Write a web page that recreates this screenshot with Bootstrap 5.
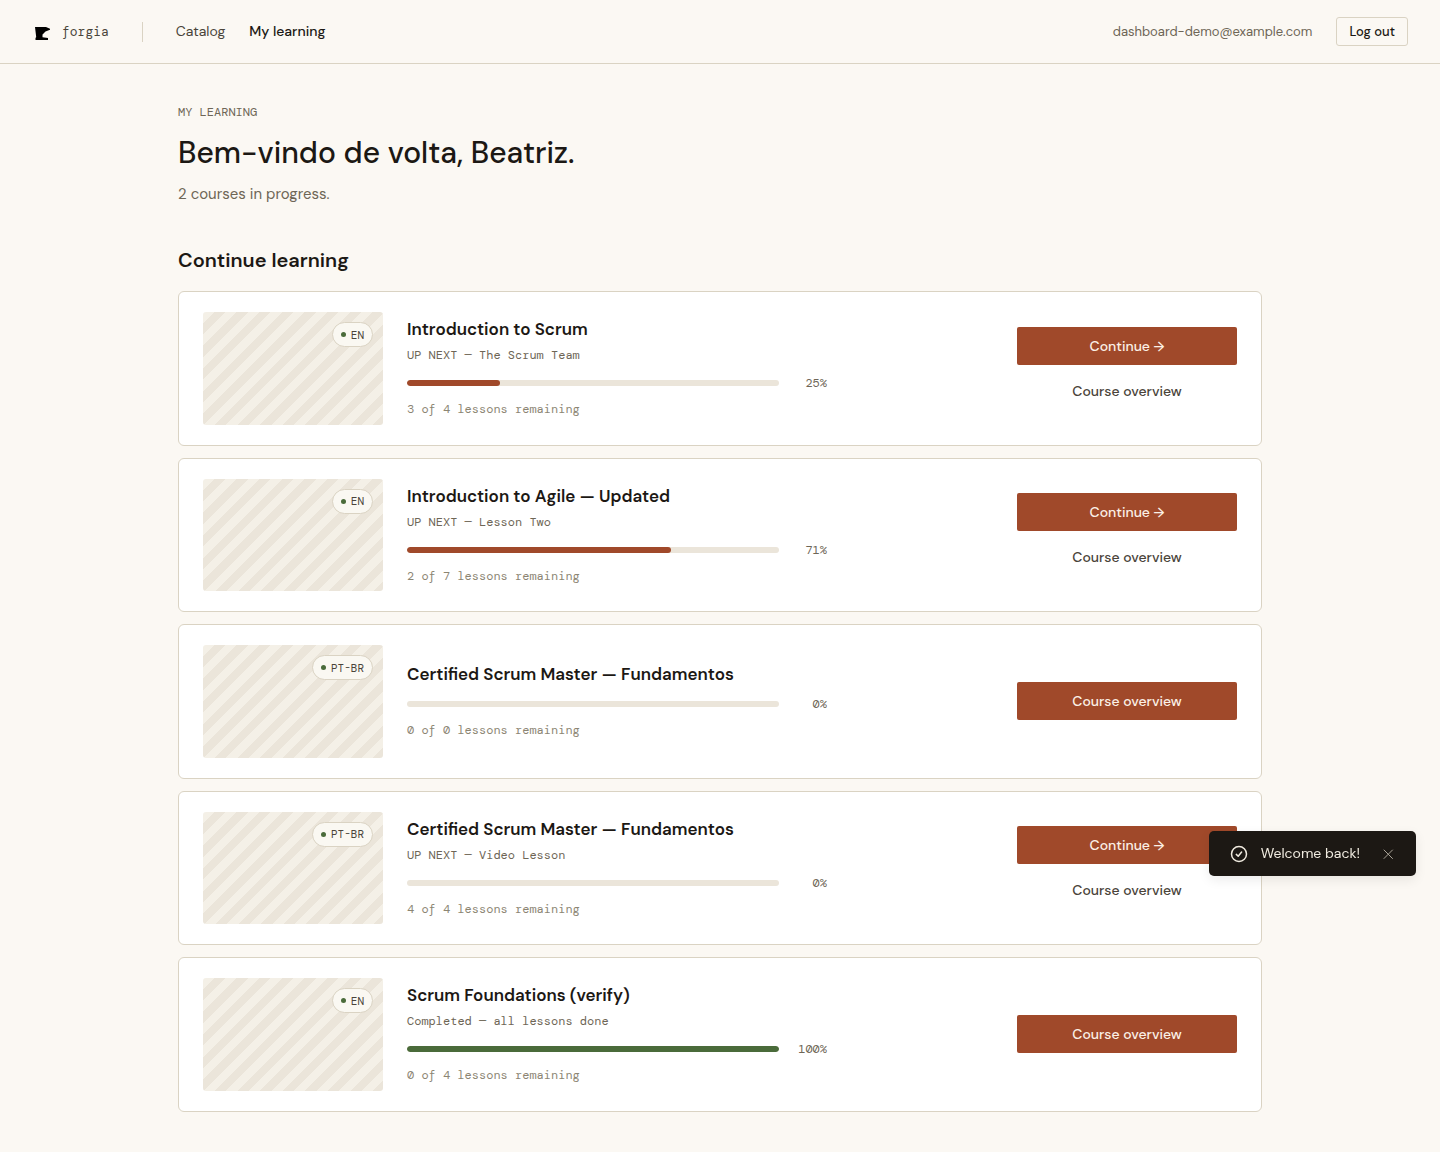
<!DOCTYPE html>
<html lang="en">
<head>
<meta charset="utf-8">
<meta name="viewport" content="width=device-width, initial-scale=1">
<title>My learning · forgia</title>
<link href="https://cdn.jsdelivr.net/npm/bootstrap@5.3.0/dist/css/bootstrap.min.css" rel="stylesheet">
<style>
:root{--paper:#fbf8f3;--ink:#1c1814;--line:#dad3c3;--muted:#6e6656;--soft:#8c8573;--sand:#ebe5da;--rust:#a0492a;--moss:#4a6b3a}
body{background:var(--paper);color:var(--ink);font-family:"DM Sans",Inter,"Open Sans",sans-serif;font-size:14px;line-height:20px}
.mono{font-family:"DM Mono","Liberation Mono",monospace}
.topbar{min-height:64px;padding:0 32px;border-bottom:1px solid var(--line)}
.brand{font-size:13px;color:#4a443a;gap:10px}
.divider{width:1px;height:20px;background:var(--line);margin:0 33px}
.topbar nav{gap:24px}
.topbar nav a{font-size:14px;line-height:19px;color:#4a443a;text-decoration:none}
.topbar nav a.active{color:var(--ink);font-weight:500}
.email{font-size:13px;color:var(--muted)}
.btn-out{font-size:13px;font-weight:500;line-height:19px;padding:4px 12px;border:1px solid var(--line);border-radius:3px;color:var(--ink)}
.page{max-width:1180px;padding:40px 48px}
.eyebrow{font-size:12px;line-height:16px;color:var(--muted);margin-bottom:12px}
h1{font-size:30px;line-height:42px;font-weight:500;margin-bottom:8px}
.intro{font-size:15px;line-height:24px;color:var(--muted);margin-bottom:40px}
h2{font-size:20px;line-height:28px;font-weight:600;margin-bottom:17px}
.courses{gap:12px}
.course{border:1px solid var(--line);border-radius:6px;background:#fff;padding:20px 24px;gap:24px}
.thumb{width:180px;aspect-ratio:16/10;border-radius:3px;background:repeating-linear-gradient(135deg,#f4f0e7 0 8px,var(--sand) 8px 16px)}
.lang{top:10px;right:10px;height:25px;padding:0 8px;gap:5px;border:1px solid var(--line);border-radius:13px;background:#faf8f2;font-size:11px;color:#4a443a}
.dot{width:5px;height:5px;border-radius:50%;background:var(--moss)}
.info{max-width:420px}
h3{font-size:17px;line-height:24px;font-weight:600;margin-bottom:9px}
h3.has-next{margin-bottom:4px}
.next{font-size:12px;line-height:20px;color:var(--muted);margin-bottom:9px}
.meter{gap:12px;height:18px;margin-bottom:7px}
.meter .progress{height:6px;border-radius:3px;background:var(--sand)}
.meter .progress-bar{background:var(--rust);border-radius:3px}
.meter .finished{background:var(--moss)}
.pct{width:36px;font-size:12px;color:var(--muted);text-align:right}
.left{font-size:12px;line-height:20px;color:var(--soft)}
.acts{width:220px;gap:7px}
.acts .btn{font-size:14px;font-weight:500;line-height:20px;padding:9px 16px;border:0;border-radius:2px;color:#4a443a}
.acts .main-act{background:var(--rust);color:#fbf0e6}
.note{right:24px;bottom:276px;height:45px;padding:0 20px;gap:12px;border-radius:5px;background:var(--ink);color:#f0ebe0;line-height:19px;box-shadow:0 4px 12px rgba(28,24,20,.08)}
.note button{color:#aaa498;width:16px;height:16px;margin-left:8px}
</style>
</head>
<body>
<header class="topbar d-flex align-items-center">
  <a href="#" class="brand mono d-flex align-items-center text-decoration-none">
    <svg width="20" height="20" viewBox="0 0 20 20" aria-hidden="true"><path d="M3 5H14L18 6.800V7.800L13.500 9.500L10.500 12.500V15.200L16 16V18H3.500V16L4.200 15Z" fill="#000"/></svg>
    forgia</a>
  <span class="divider"></span>
  <nav class="d-flex"><a href="#">Catalog</a><a href="#" class="active">My learning</a></nav>
  <span class="email ms-auto me-4">dashboard-demo@example.com</span>
  <button class="btn btn-out">Log out</button>
</header>
<main class="page mx-auto">
  <p class="eyebrow mono">MY LEARNING</p>
  <h1>Bem-vindo de volta, Beatriz.</h1>
  <p class="intro">2 courses in progress.</p>
  <h2>Continue learning</h2>
  <div id="courses" class="courses d-flex flex-column"></div>
</main>
<div class="note position-fixed d-flex align-items-center" role="status">
  <svg width="20" height="20" viewBox="0 0 20 20" fill="none" stroke="#f0ebe0" stroke-width="1.500" stroke-linecap="round" stroke-linejoin="round" aria-hidden="true"><circle cx="10" cy="10" r="7.500"/><path d="M7.300 10.400L9.200 12.200L12.600 8"/></svg>
  <span>Welcome back!</span>
  <button class="btn p-0 border-0 d-flex" aria-label="Dismiss"><svg width="16" height="16" viewBox="0 0 16 16" stroke="currentColor" stroke-width="1" stroke-linecap="round"><path d="M4 4l8.500 8.500M12.500 4L4 12.500"/></svg></button>
</div>
<script src="https://cdn.jsdelivr.net/npm/bootstrap@5.3.0/dist/js/bootstrap.bundle.min.js"></script>
<script>
const courses=[
 ['EN','Introduction to Scrum','UP NEXT — The Scrum Team',25,'3 of 4',1],
 ['EN','Introduction to Agile — Updated','UP NEXT — Lesson Two',71,'2 of 7',1],
 ['PT-BR','Certified Scrum Master — Fundamentos','',0,'0 of 0',0],
 ['PT-BR','Certified Scrum Master — Fundamentos','UP NEXT — Video Lesson',0,'4 of 4',1],
 ['EN','Scrum Foundations (verify)','Completed — all lessons done',100,'0 of 4',0]];
document.getElementById('courses').innerHTML=courses.map(([l,t,n,p,r,c])=>`
<article class="course d-flex align-items-center">
 <div class="thumb position-relative flex-shrink-0"><span class="lang mono position-absolute d-flex align-items-center"><i class="dot"></i>${l}</span></div>
 <div class="info flex-grow-1"><h3 class="${n?'has-next':''}">${t}</h3>${n?`<p class="next mono">${n}</p>`:''}
 <div class="meter d-flex align-items-center"><div class="progress flex-grow-1" role="progressbar" aria-label="${t}" aria-valuenow="${p}"><div class="progress-bar ${p==100?'finished':''}" style="width:${p}%"></div></div><span class="pct mono">${p}%</span></div>
 <p class="left mono mb-0">${r} lessons remaining</p></div>
 <div class="acts d-flex flex-column ms-auto flex-shrink-0">${c?'<a href="#" class="btn main-act">Continue →</a><a href="#" class="btn">Course overview</a>':'<a href="#" class="btn main-act">Course overview</a>'}</div>
</article>`).join('');
</script>
</body>
</html>
